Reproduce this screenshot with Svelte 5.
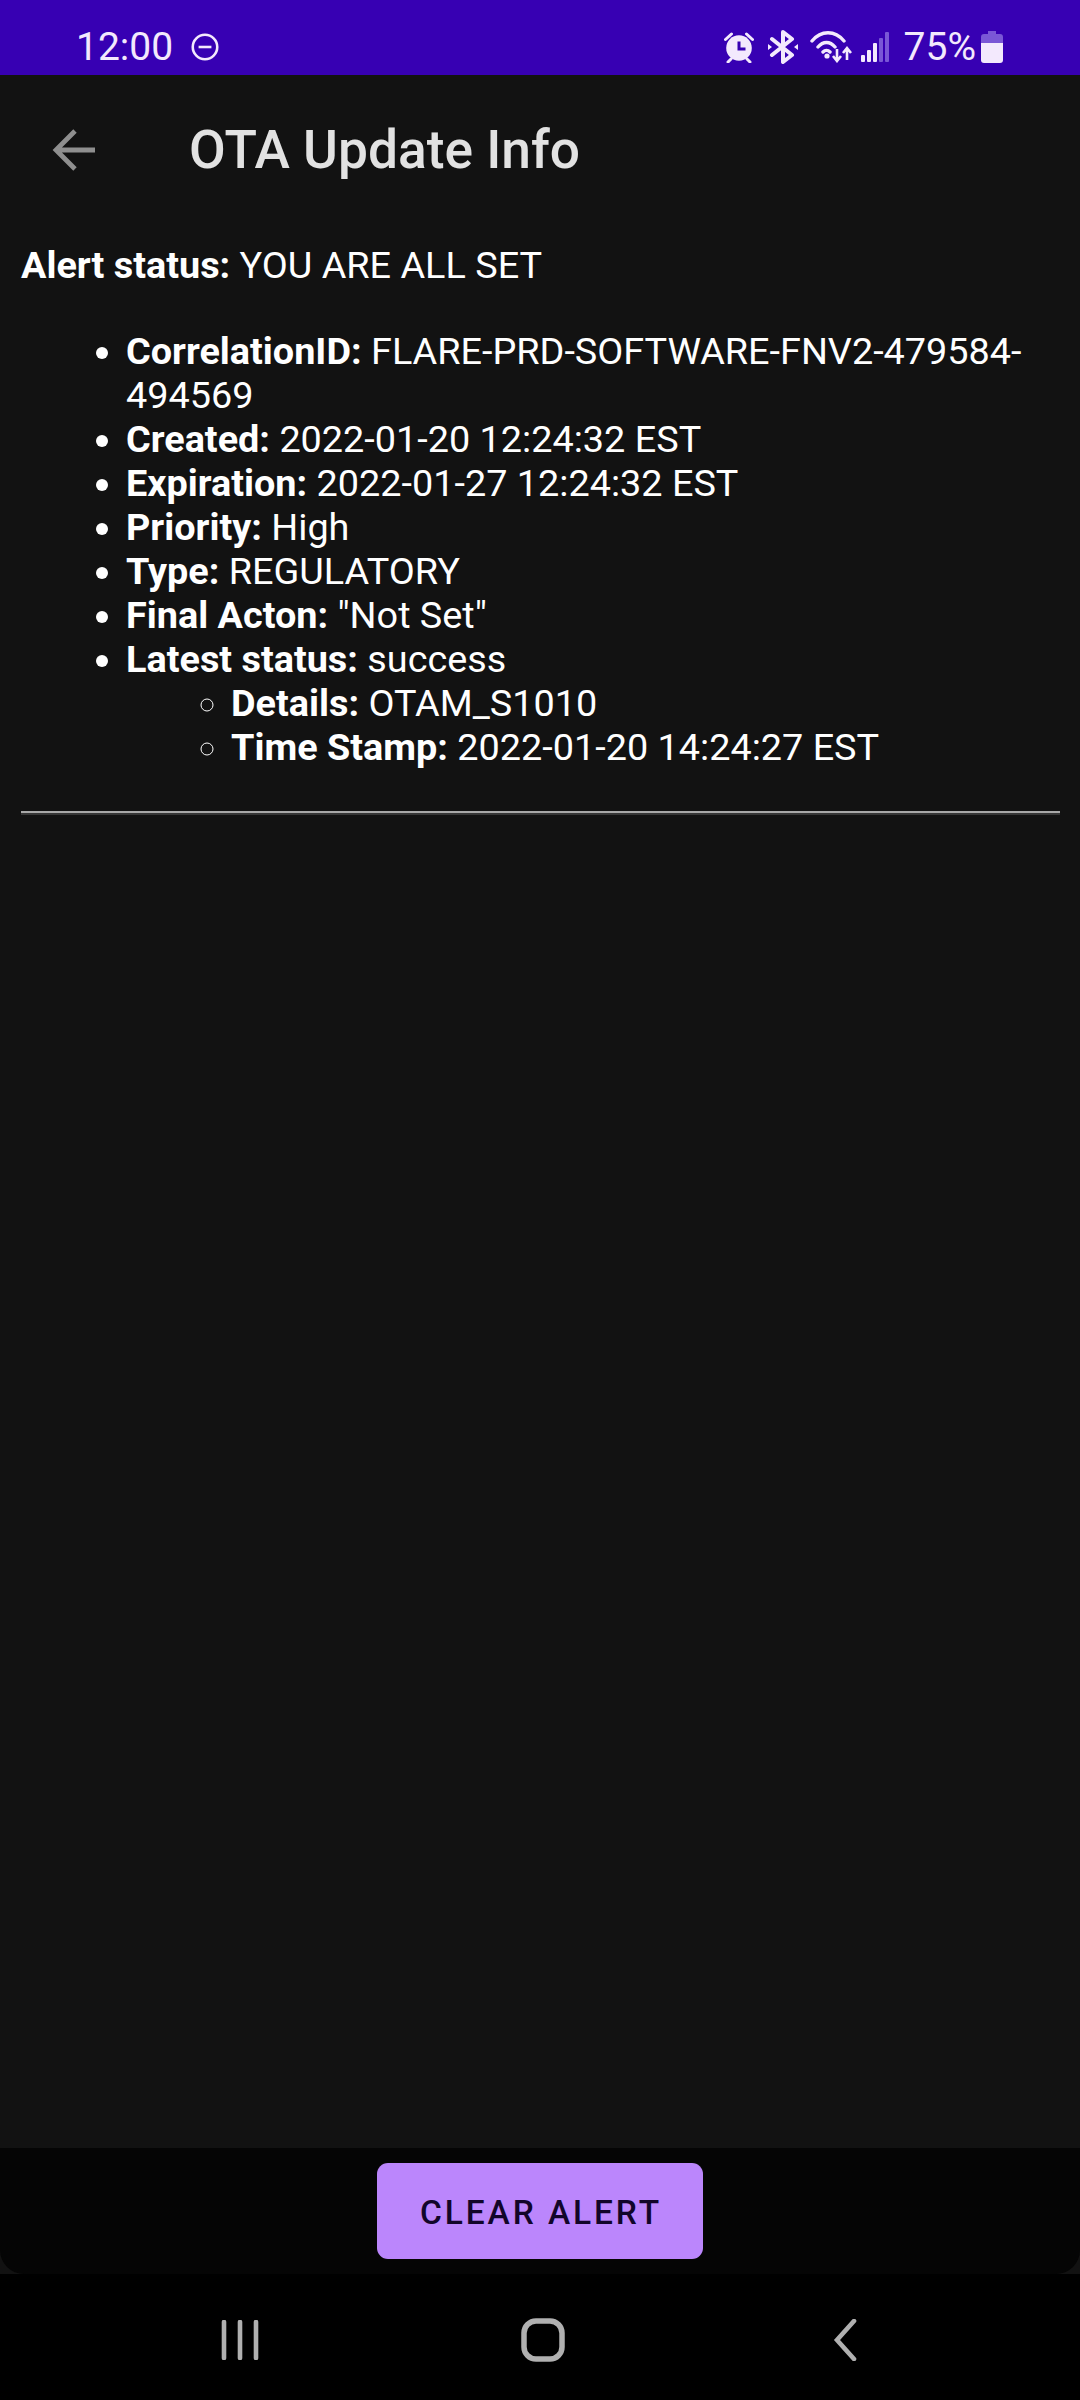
<script lang="ts">
  const details = [
    { label: 'Created:', value: '2022-01-20 12:24:32 EST' },
    { label: 'Expiration:', value: '2022-01-27 12:24:32 EST' },
    { label: 'Priority:', value: 'High' },
    { label: 'Type:', value: 'REGULATORY' },
    { label: 'Final Acton:', value: '"Not Set"' }
  ];
  const latest = [
    { label: 'Details:', value: 'OTAM_S1010' },
    { label: 'Time Stamp:', value: '2022-01-20 14:24:27 EST' }
  ];
  const bars = [
    { h: 7, on: true },
    { h: 12, on: true },
    { h: 19, on: true },
    { h: 24, on: false },
    { h: 30, on: false }
  ];
</script>

<div class="screen">
  <header class="status">
    <div class="status__left">
      <span class="status__time">12:00</span>
      <svg class="dnd" viewBox="0 0 24 24" aria-hidden="true">
        <circle cx="12" cy="12" r="10.5" />
        <path d="M6.5 12h11" />
      </svg>
    </div>
    <div class="status__right">
      <svg class="ic-alarm" viewBox="0 0 32 32" aria-hidden="true">
        <circle cx="16" cy="17" r="12.8" fill="#f3e9fd" />
        <path d="M16 10.5v7.5h6.5" fill="none" stroke="#3700b3" stroke-width="3" />
        <path d="M2.5 8.5l6-5.5M29.5 8.5l-6-5.5M8 28l-3 3M24 28l3 3" fill="none" stroke="#f3e9fd" stroke-width="3" stroke-linecap="round" />
      </svg>
      <svg class="ic-bt" viewBox="0 0 30 34" aria-hidden="true">
        <path d="M4 9l20 16-9 7V2l9 7L4 25" fill="none" stroke="#f3e9fd" stroke-width="4" stroke-linejoin="round" stroke-linecap="round" />
        <path d="M0 14l4 3-4 3zM30 14l-4 3 4 3z" fill="#f3e9fd" />
      </svg>
      <svg class="ic-wifi" viewBox="0 0 42 32" aria-hidden="true">
        <path d="M2 10C11-1 25-1 34 10M8 16c5-6 12-6 17 0M13 21c2-2 5-2 7 0" fill="none" stroke="#f3e9fd" stroke-width="3.4" stroke-linecap="round" />
        <circle cx="17" cy="25" r="2.6" fill="#f3e9fd" />
        <path d="M27 18v12M23 25l4 5 4-5M37 29V17M33 22l4-5 4 5" fill="none" stroke="#f3e9fd" stroke-width="2.6" />
      </svg>
      <svg class="ic-signal" viewBox="0 0 28 30" aria-hidden="true">
        {#each bars as bar, i}
          <rect x={i * 6} y={30 - bar.h} width="4" height={bar.h} rx="1" fill={bar.on ? '#f3e9fd' : '#7a57d6'} />
        {/each}
      </svg>
      <span class="status__pct">75%</span>
      <svg class="ic-batt" viewBox="0 0 22 32" aria-hidden="true">
        <path d="M7 0h8v3h4a3 3 0 0 1 3 3v6H0V6a3 3 0 0 1 3-3h4z" fill="#7a57d6" />
        <path d="M0 12h22v17a3 3 0 0 1-3 3H3a3 3 0 0 1-3-3z" fill="#f3e9fd" />
      </svg>
    </div>
  </header>

  <div class="toolbar">
    <svg class="back" viewBox="0 0 43 42" aria-hidden="true">
      <path d="M43 21H4M23 2L4 21l19 19" fill="none" stroke="#8f8f8f" stroke-width="4.8" />
    </svg>
    <h1 class="toolbar__title">OTA Update Info</h1>
  </div>

  <main class="content">
    <p class="alert"><b>Alert status:</b> YOU ARE ALL SET</p>
    <ul class="info">
      <li><b>CorrelationID:</b> FLARE-PRD-SOFTWARE-FNV2-479584-494569</li>
      {#each details as row}
        <li><b>{row.label}</b> {row.value}</li>
      {/each}
      <li>
        <b>Latest status:</b> success
        <ul class="info__sub">
          {#each latest as row}
            <li><b>{row.label}</b> {row.value}</li>
          {/each}
        </ul>
      </li>
    </ul>
    <hr class="rule" />
  </main>

  <footer class="actions">
    <button class="clear" type="button">CLEAR ALERT</button>
  </footer>

  <nav class="navbar" aria-label="System navigation">
    <svg class="nav-recents" viewBox="0 0 38 40" aria-hidden="true">
      <path d="M3 2v36M19 2v36M35 2v36" fill="none" stroke="#b0b0b0" stroke-width="4.6" stroke-linecap="round" />
    </svg>
    <svg class="nav-home" viewBox="0 0 44 44" aria-hidden="true">
      <rect x="3" y="3" width="38" height="38" rx="12" fill="none" stroke="#b0b0b0" stroke-width="5.5" />
    </svg>
    <svg class="nav-back" viewBox="0 0 24 42" aria-hidden="true">
      <path d="M21 2L4 21l17 19" fill="none" stroke="#b0b0b0" stroke-width="4.6" stroke-linecap="round" />
    </svg>
  </nav>
</div>

<style>
  :global(body) {
    margin: 0;
    background: #000;
  }

  .screen {
    width: 1080px;
    height: 2400px;
    display: flex;
    flex-direction: column;
    background: #121212;
    font-family: Roboto, "Liberation Sans", sans-serif;
    color: #fff;
    overflow: hidden;
  }

  .status {
    height: 75px;
    flex: none;
    background: #3700b3;
    color: #f3e9fd;
    display: flex;
    justify-content: space-between;
    align-items: center;
    padding: 0 77px 0 76px;
    box-sizing: border-box;
  }

  .status__left,
  .status__right {
    display: flex;
    align-items: center;
    padding-top: 18px;
  }

  .status__time {
    font-size: 39px;
    line-height: 44px;
  }

  .dnd {
    width: 28px;
    height: 28px;
    margin-left: 18px;
    fill: none;
    stroke: #f3e9fd;
    stroke-width: 2.2;
  }

  .status__pct {
    font-size: 39px;
    line-height: 44px;
    margin-left: 15px;
    margin-right: 5px;
  }

  .ic-alarm { width: 32px; height: 32px; }
  .ic-bt { width: 30px; height: 34px; margin-left: 13px; }
  .ic-wifi { width: 42px; height: 32px; margin-left: 12px; }
  .ic-signal { width: 28px; height: 30px; margin-left: 9px; }
  .ic-batt { width: 22px; height: 32px; }

  .toolbar {
    height: 147px;
    flex: none;
    display: flex;
    align-items: center;
    box-sizing: border-box;
    padding: 3px 0 0 52px;
  }

  .back {
    width: 43px;
    height: 42px;
  }

  .toolbar__title {
    margin: 0 0 0 94px;
    font-size: 53.3px;
    font-weight: 500;
    color: #e2e2e2;
  }

  .content {
    flex: 1;
    padding: 0 20px 0 21px;
    font-size: 37.8px;
    line-height: 44px;
    min-height: 0;
  }

  .alert {
    margin: 21px 0 0;
  }

  .info {
    margin: 42px 0 0;
    padding: 0 0 0 105px;
  }

  .info__sub {
    margin: 0;
    padding: 0 0 0 105px;
    list-style: circle;
  }

  b {
    font-weight: 700;
  }

  .rule {
    height: 0;
    margin: 42px 0 0;
    border: 0;
    border-top: 2px solid #a8a8a8;
    border-bottom: 2px solid #363636;
  }

  .actions {
    height: 126px;
    flex: none;
    background: #050505;
    display: flex;
    justify-content: center;
    align-items: flex-start;
    padding-top: 15px;
    box-sizing: border-box;
    border-radius: 0 0 24px 24px;
  }

  .clear {
    width: 326px;
    height: 96px;
    padding: 2px 0 0 2px;
    border: 0;
    border-radius: 11px;
    background: #bb86fc;
    color: #12052a;
    font-family: inherit;
    font-size: 33.5px;
    font-weight: 500;
    letter-spacing: 2.9px;
  }

  .navbar {
    height: 126px;
    flex: none;
    background: #000;
    display: flex;
    align-items: center;
    box-sizing: border-box;
    padding: 6px 0 0 221px;
  }

  .nav-recents { width: 38px; height: 40px; }
  .nav-home { width: 44px; height: 44px; margin-left: 262px; }
  .nav-back { width: 24px; height: 42px; margin-left: 268px; }
</style>
